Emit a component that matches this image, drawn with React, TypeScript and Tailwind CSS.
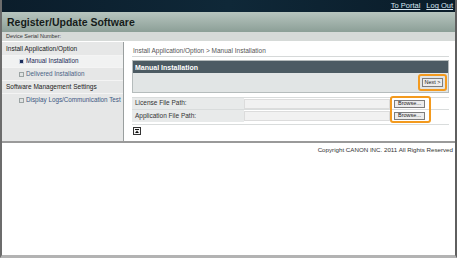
import React from "react";

const font = "font-['Liberation_Sans',Arial,sans-serif]";

function Bullet({ active }: { active?: boolean }) {
  return active ? (
    <span className="w-[5px] h-[5px] bg-[#1b2d5c] border border-[#c9d0dc]" />
  ) : (
    <span className="w-[5px] h-[5px] bg-[#dfe2e2] border border-[#9ba3a3]" />
  );
}

function UpIcon() {
  return (
    <svg width="8" height="8" viewBox="0 0 8 8">
      <rect x="0.5" y="0.5" width="7" height="7" fill="#f4f4f4" stroke="#333" />
      <line x1="2" y1="2.5" x2="6" y2="2.5" stroke="#111" />
      <path d="M2 6 L4 3.5 L6 6 Z" fill="#111" />
    </svg>
  );
}

function Sidebar() {
  return (
    <div className="w-[122px] bg-[#e6e7e7] border-r border-[#9a9f9f] text-[6.5px] leading-none whitespace-nowrap">
      <div className="h-[14px] flex items-center pt-[1px] pl-[4px] text-[#222] border-b border-[#f4f4f4]">
        Install Application/Option
      </div>
      <div className="h-[12px] flex items-center gap-[2px] pl-[17px] bg-[#f1f2f2] text-[#1a2a55] text-[6.3px] border-b border-[#f4f4f4]">
        <Bullet active />
        Manual Installation
      </div>
      <div className="h-[13px] flex items-center gap-[2px] pl-[17px] text-[#4a6284] text-[6.3px] border-b border-[#f4f4f4]">
        <Bullet />
        Delivered Installation
      </div>
      <div className="h-[13px] flex items-center pl-[4px] text-[#222] border-b border-[#f4f4f4]">
        Software Management Settings
      </div>
      <div className="h-[13px] flex items-center gap-[2px] pl-[17px] text-[#3d5782] text-[6.3px]">
        <Bullet />
        Display Logs/Communication Test
      </div>
    </div>
  );
}

function SmallButton({ label, w }: { label: string; w: string }) {
  return (
    <button
      className={`${w} h-[8px] flex items-center justify-center bg-[#ececec] border border-[#7d7d7d] text-[5.5px] leading-none text-[#222]`}
    >
      {label}
    </button>
  );
}

function Content() {
  return (
    <div className="flex-1 pl-[8px] pr-[6px] text-[6.5px] leading-none text-[#333]">
      <div className="h-[15px] flex items-end pb-[2px] pl-[1px] text-[#555] border-b border-[#d6d9d9]">
        Install Application/Option &gt; Manual Installation
      </div>
      <div className="mt-[3px] border border-[#b5bcbc]">
        <div className="h-[12px] flex items-center pl-[2px] bg-[#4c5b63] text-white font-bold text-[7px]">
          Manual Installation
        </div>
        <div className="h-[19px] flex items-center justify-end pr-[1px] bg-[#e1e5e5]">
          <div className="p-[2px] rounded-[3px] border-2 border-[#f39a1e]">
            <SmallButton label="Next >" w="w-[21px] h-[9px]" />
          </div>
        </div>
      </div>
      <div className="mt-[4px] relative border-b border-[#d9dcdc] pb-[2px]">
        <div className="flex h-[12px] items-center border-t border-[#d9dcdc]">
          <div className="w-[112px] h-full flex items-center pl-[3px] bg-[#e8eaea]">License File Path:</div>
          <div className="w-[146px] h-[10px] bg-[#f1f1f1] border border-[#dcdcdc]" />
          <div className="flex-1 flex pl-[4px]">
            <SmallButton label="Browse..." w="w-[31px]" />
          </div>
        </div>
        <div className="flex h-[13px] items-center border-t border-[#d9dcdc]">
          <div className="w-[112px] h-full flex items-center pl-[3px] bg-[#e8eaea]">Application File Path:</div>
          <div className="w-[146px] h-[10px] bg-[#f1f1f1] border border-[#dcdcdc]" />
          <div className="flex-1 flex pl-[4px]">
            <SmallButton label="Browse..." w="w-[31px]" />
          </div>
        </div>
        <div className="absolute left-[258px] top-[-1px] w-[41px] h-[27px] rounded-[3px] border-2 border-[#f39a1e]" />
      </div>
      <div className="mt-[2px] pl-[1px]">
        <UpIcon />
      </div>
    </div>
  );
}

export default function App() {
  return (
    <div className={`${font} w-[457px] h-[258px] bg-white border-l-2 border-r-2 border-b-[3px] border-l-[#6c6c6c] border-r-[#5f5f5f] border-b-[#b3b3b3] flex flex-col`}>
      <div className="h-[12px] bg-gradient-to-r from-[#0b1d2b] via-[#0f2838] to-[#0a1c29] flex items-center justify-end gap-[6px] pr-[2px] text-[7.5px] leading-none text-[#d6e6f2]">
        <span className="underline">To Portal</span>
        <span className="underline">Log Out</span>
      </div>
      <div className="h-[20px] bg-gradient-to-b from-[#b7c5bf] to-[#8c9f97] flex items-center pl-[5px] text-[10.5px] font-bold text-[#161c1a] leading-none">
        Register/Update Software
      </div>
      <div className="h-[10px] bg-[#d6dad8] flex items-center pl-[4px] text-[5.5px] leading-none text-[#333] border-b border-white">
        Device Serial Number:
      </div>
      <div className="h-[101px] flex border-b-2 border-[#9a9a9a]">
        <Sidebar />
        <Content />
      </div>
      <div className="flex justify-end pr-[2px] pt-[4px] text-[6.2px] leading-none text-[#333]">
        Copyright CANON INC. 2011 All Rights Reserved
      </div>
    </div>
  );
}
